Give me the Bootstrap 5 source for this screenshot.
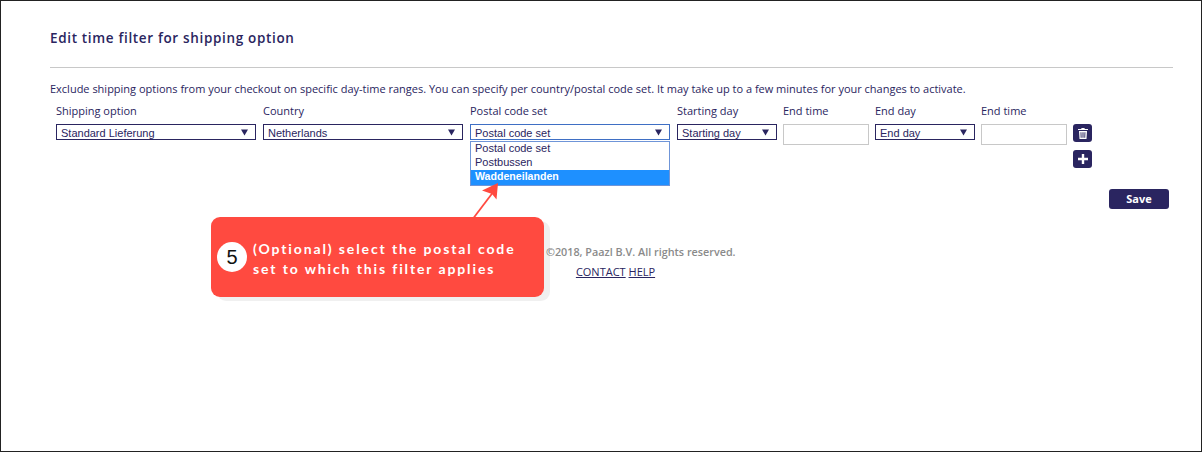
<!DOCTYPE html>
<html lang="en">
<head>
<meta charset="utf-8">
<title>Edit time filter</title>
<link href="https://cdn.jsdelivr.net/npm/bootstrap@5.3.0/dist/css/bootstrap.min.css" rel="stylesheet">
<style>
html,body{height:100%;margin:0;background:#fff}
.frame{position:relative;height:452px;border:1px solid #222;overflow:hidden;font-family:"Open Sans",sans-serif;color:#2a2560;padding:0 28px 0 49px}
.page-title{font-size:13.5px;font-weight:600;letter-spacing:.66px;line-height:18px;margin:0;padding-top:28px;color:#2a2560}
.rule{margin:20px 0 0;border:0;border-top:1px solid #c8c8c8;opacity:1}
.intro{font-size:11px;line-height:14px;margin:14px 0 0;color:#2a2560;letter-spacing:-.005px}
.fields{padding-left:6px;margin-top:8px}
.f-wide{width:207px}.f-mid{width:106px}.f-time{width:92px}
.f-label{display:block;font-size:11px;line-height:14px;margin:0 0 6px;color:#2a2560}
.pick.form-select{width:200px;height:16px;margin-top:1px;padding:1px 0 0 4px;border:1px solid #2a2560;border-radius:0;font:11px/14px "Liberation Sans",sans-serif;color:#2a2560;background-size:7px 7px;background-position:right 7px center;background-image:url("data:image/svg+xml,%3Csvg xmlns='http://www.w3.org/2000/svg' viewBox='0 0 8 7'%3E%3Cpath fill='%232a2560' d='M0 0h8L4 7z'/%3E%3C/svg%3E")}
.f-mid .pick.form-select{width:100px}
.pick.is-open{border-color:#3f6fc4}
.when.form-control{width:86px;height:21px;padding:0 4px;border:1px solid #c8c8c8;border-radius:0;font-size:11px}
.tool.btn{width:19px;height:18px;padding:0;display:flex;align-items:center;justify-content:center;background:#2a2560;border:0;border-radius:3px}
.tool-gap{margin-top:8px}
.tools{padding-top:20px}
.save-row{margin-top:21px;padding-right:4px}
.save.btn{width:60px;height:20px;padding:0;background:#2a2560;border:0;border-radius:3px;color:#fff;font:700 11px/20px "Open Sans",sans-serif}
.legal{font-size:10.8px;font-weight:600;line-height:14px;color:#8a8a8a;margin:36px 0 0;padding-left:5px}
.legal-links{font-size:11px;line-height:14px;margin:6px 0 0;padding-left:8px}
.legal-links a{color:#2a2560}
.options{position:absolute;left:469px;top:140px;width:200px;height:45px;border:1px solid #6f95d8;border-radius:0;background:#fff;z-index:2}
.options .list-group-item{border:0;border-radius:0;padding:0 4px;height:14px;font:11px/13px "Liberation Sans",sans-serif;color:#2a2560;background:transparent}
.options .list-group-item.hit{background:#1e90ff;color:#fff;height:15px;font-weight:700;font-size:10.6px}
.callout{position:absolute;left:210px;top:216px;width:333px;height:80px;background:#ff4a40;border-radius:9px;box-shadow:6px 4px 0 rgba(0,0,0,.06);z-index:3;display:flex;align-items:center;color:#fff}
.step{width:30px;height:30px;flex:none;margin:0 6px;border-radius:50%;background:#fff;color:#111;display:flex;align-items:center;justify-content:center;font:400 20px/1 "Liberation Sans",sans-serif}
.callout-text{font:700 14px/20px "Lato",sans-serif;letter-spacing:1.88px;margin:3px 0 0;white-space:nowrap}
.pointer{position:absolute;left:465px;top:178px;z-index:4}
</style>
</head>
<body>
<div class="frame">
  <h1 class="page-title">Edit time filter for shipping option</h1>
  <hr class="rule">
  <p class="intro">Exclude shipping options from your checkout on specific day-time ranges. You can specify per country/postal code set. It may take up to a few minutes for your changes to activate.</p>
  <div class="fields d-flex">
    <div class="f-wide"><label class="f-label">Shipping option</label>
      <select class="form-select pick"><option>Standard Lieferung</option></select></div>
    <div class="f-wide"><label class="f-label">Country</label>
      <select class="form-select pick"><option>Netherlands</option></select></div>
    <div class="f-wide"><label class="f-label">Postal code set</label>
      <select class="form-select pick is-open"><option>Postal code set</option></select></div>
    <div class="f-mid"><label class="f-label">Starting day</label>
      <select class="form-select pick"><option>Starting day</option></select></div>
    <div class="f-time"><label class="f-label">End time</label>
      <input class="form-control when" type="text"></div>
    <div class="f-mid"><label class="f-label">End day</label>
      <select class="form-select pick"><option>End day</option></select></div>
    <div class="f-time"><label class="f-label">End time</label>
      <input class="form-control when" type="text"></div>
    <div class="tools">
      <button class="btn tool" type="button" aria-label="Delete">
        <svg width="10" height="11" viewBox="0 0 10 11"><path fill="#fff" d="M3.600 0h2.800l.5 1H10v1H0V1h3.100zM1 3h8l-.5 8h-7zm1.500 1.200.2 5.600h.9L3.400 4.200zm2 0v5.600h1V4.200zm2 0-.2 5.600h.9l.2-5.600z"/></svg>
      </button>
      <button class="btn tool tool-gap" type="button" aria-label="Add">
        <svg width="10" height="10" viewBox="0 0 10 10"><path fill="#fff" d="M3.800 0h2.400v3.800H10v2.400H6.200V10H3.800V6.200H0V3.800h3.800z"/></svg>
      </button>
    </div>
  </div>
  <div class="save-row d-flex justify-content-end"><button class="btn save" type="button">Save</button></div>
  <p class="legal text-center">Copyright ©2018, Paazl B.V. All rights reserved.</p>
  <p class="legal-links text-center"><a href="#">CONTACT</a> <a href="#">HELP</a></p>

  <div class="options list-group">
    <div class="list-group-item">Postal code set</div>
    <div class="list-group-item">Postbussen</div>
    <div class="list-group-item hit">Waddeneilanden</div>
  </div>
  <svg class="pointer" width="40" height="42" viewBox="0 0 40 42"><path d="M7.500 39 28 12" stroke="#ff4a40" stroke-width="1.800" fill="none"/><path fill="#ff4a40" d="M32 4 30.500 20.500 26 15 16 11.500z"/></svg>
  <div class="callout">
    <div class="step">5</div>
    <p class="callout-text">(Optional) select the postal code<br>set to which this filter applies</p>
  </div>
</div>
</body>
</html>
